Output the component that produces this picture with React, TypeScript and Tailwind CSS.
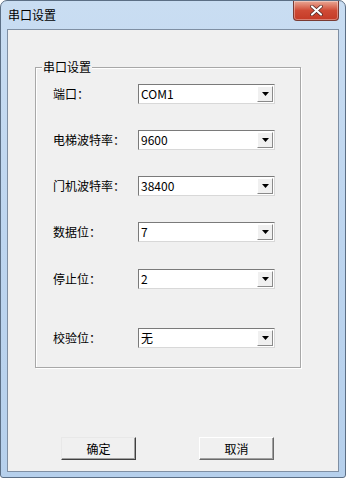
import React from 'react';

const FONT = { fontFamily: '"Noto Sans CJK SC", "Liberation Sans", sans-serif' };

const rows: { label: string; value: string; gap: string }[] = [
  { label: '端口：', value: 'COM1', gap: 'mt-[16px]' },
  { label: '电梯波特率：', value: '9600', gap: 'mt-[26px]' },
  { label: '门机波特率：', value: '38400', gap: 'mt-[26px]' },
  { label: '数据位：', value: '7', gap: 'mt-[26px]' },
  { label: '停止位：', value: '2', gap: 'mt-[27px]' },
  { label: '校验位：', value: '无', gap: 'mt-[39px]' },
];

const Combo: React.FC<{ value: string }> = ({ value }) => (
  <div className="flex h-[20px] w-[137px] shrink-0 items-stretch border border-t-[#7a7a7a] border-l-[#7a7a7a] border-r-[#d8d8d8] border-b-[#d8d8d8] bg-white">
    <span className="flex-1 pl-[2px] text-[12px] leading-[18px] text-black">{value}</span>
    <span className="my-[1px] mr-[1px] flex w-[16px] items-center justify-center border border-t-white border-l-white border-r-[#8a8a8a] border-b-[#8a8a8a] bg-[#f0f0f0]">
      <svg width="7" height="4" viewBox="0 0 7 4">
        <path d="M0 0h7L3.5 4z" fill="#000" />
      </svg>
    </span>
  </div>
);

const Button: React.FC<{ text: string; primary?: boolean }> = ({ text, primary }) => (
  <button
    type="button"
    className={`flex h-[23px] w-[75px] items-center justify-center border text-[12px] text-black ${
      primary
        ? 'border-t-[#e8e8e8] border-l-[#e8e8e8] border-r-[#404040] border-b-[#404040] bg-[#f0f0f0] shadow-[inset_-1px_-1px_0_#a0a0a0]'
        : 'border-t-white border-l-white border-r-[#6a6a6a] border-b-[#6a6a6a] bg-[#f0f0f0] shadow-[inset_-1px_-1px_0_#a0a0a0]'
    }`}
  >
    {text}
  </button>
);

export default function App() {
  return (
    <div
      className="flex h-[478px] w-[346px] flex-col rounded-t-[7px] rounded-b-[3px] border border-[#5c6f85] bg-gradient-to-b from-[#c9ddf2] via-[#bdd5ef] to-[#b6d0ec]"
      style={FONT}
    >
      <div className="flex h-[28px] shrink-0 items-start justify-between">
        <span className="pl-[7px] pt-[6px] text-[12px] leading-[16px] text-black">串口设置</span>
        <div className="mr-[6px] flex h-[20px] w-[46px] items-center justify-center rounded-b-[4px] border border-t-0 border-[#7a3b33] bg-gradient-to-b from-[#e8a795] via-[#cf4a35] to-[#c43a26] shadow-[inset_0_0_0_1px_rgba(255,255,255,0.35)]">
          <svg width="13" height="11" viewBox="0 0 13 11">
            <path d="M2 1.5l9 8M11 1.5l-9 8" stroke="#4a2420" strokeWidth="3.6" strokeLinecap="round" />
            <path d="M2 1.5l9 8M11 1.5l-9 8" stroke="#ffffff" strokeWidth="2.2" strokeLinecap="round" />
          </svg>
        </div>
      </div>

      <div className="mx-[6px] flex h-[443px] flex-col border border-[#7f8fa3] bg-[#f0f0f0]">
        <div className="relative ml-[27px] mt-[37px] flex h-[301px] w-[266px] flex-col border border-[#a8a8a8] shadow-[inset_1px_1px_0_#ffffff,1px_1px_0_#ffffff]">
          <span className="absolute left-[6px] top-[-9px] bg-[#f0f0f0] px-[1px] text-[12px] leading-[16px] text-black">
            串口设置
          </span>
          {rows.map((r) => (
            <div key={r.label} className={`flex items-center ${r.gap}`}>
              <span className="w-[102px] shrink-0 whitespace-nowrap pl-[17px] text-[12px] text-black">{r.label}</span>
              <Combo value={r.value} />
            </div>
          ))}
        </div>

        <div className="mt-auto mb-[11px] flex pl-[53px]">
          <Button text="确定" primary />
          <div className="w-[63px]" />
          <Button text="取消" />
        </div>
      </div>
    </div>
  );
}
